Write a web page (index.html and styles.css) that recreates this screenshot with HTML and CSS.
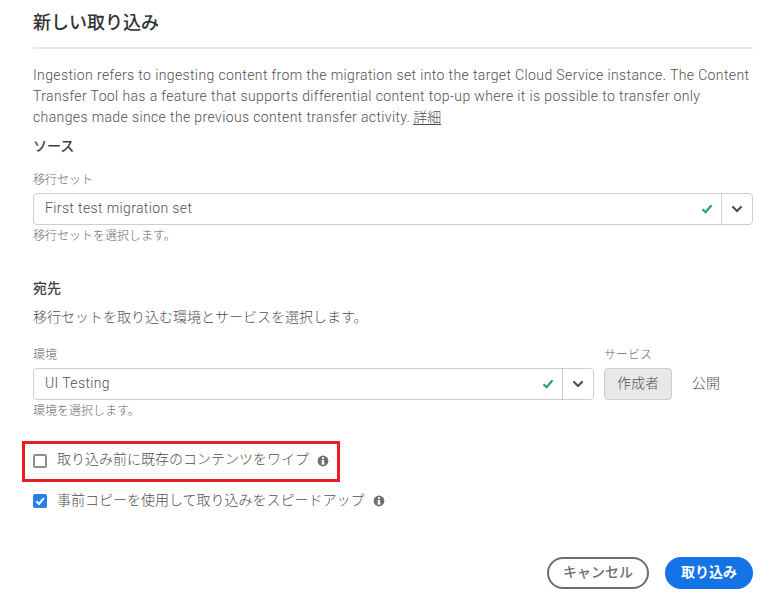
FILE: index.html
```html
<!DOCTYPE html>
<html lang="ja">
<head>
<meta charset="utf-8">
<title>新しい取り込み</title>
<link rel="stylesheet" href="styles.css">
</head>
<body>
<main class="dialog">
  <h1 class="title">新しい取り込み</h1>
  <p class="intro">Ingestion refers to ingesting content from the migration set into the target Cloud Service instance. The Content<br>Transfer Tool has a feature that supports differential content top-up where it is possible to transfer only<br>changes made since the previous content transfer activity. <a class="more">詳細</a></p>
  <h2 class="section">ソース</h2>
  <div class="field source">
    <div class="label">移行セット</div>
    <div class="combo">
      <span class="value latin">First test migration set</span>
      <svg class="valid" viewBox="0 0 12 12"><path d="M1.5 6.2 4.6 9.2 10.5 2.2"/></svg>
      <span class="drop"><svg class="chevron" viewBox="0 0 12 8"><path d="M2 2 6 6 10 2"/></svg></span>
    </div>
    <div class="help">移行セットを選択します。</div>
  </div>
  <h2 class="section">宛先</h2>
  <p class="lead">移行セットを取り込む環境とサービスを選択します。</p>
  <div class="row">
    <div class="field environment">
      <div class="label">環境</div>
      <div class="combo">
        <span class="value latin">UI Testing</span>
        <svg class="valid" viewBox="0 0 12 12"><path d="M1.5 6.2 4.6 9.2 10.5 2.2"/></svg>
        <span class="drop"><svg class="chevron" viewBox="0 0 12 8"><path d="M2 2 6 6 10 2"/></svg></span>
      </div>
      <div class="help">環境を選択します。</div>
    </div>
    <div class="field service">
      <div class="label">サービス</div>
      <div class="tabs"><span class="tab selected">作成者</span><span class="tab">公開</span></div>
    </div>
  </div>
  <div class="option marked">
    <span class="box"></span>
    <span class="text">取り込み前に既存のコンテンツをワイプ</span>
    <svg class="info" viewBox="0 0 12 12"><circle cx="6" cy="6" r="5.4"/><path d="M5 2.3h2v1.8H5zM4.5 5H7v3.2h.7v1.2H4.4V8.2H5V6.1h-.5z"/></svg>
  </div>
  <div class="option">
    <span class="box checked"><svg viewBox="0 0 14 14"><path d="M3.3 7.2 6 10 10.8 4.2"/></svg></span>
    <span class="text">事前コピーを使用して取り込みをスピードアップ</span>
    <svg class="info" viewBox="0 0 12 12"><circle cx="6" cy="6" r="5.4"/><path d="M5 2.3h2v1.8H5zM4.5 5H7v3.2h.7v1.2H4.4V8.2H5V6.1h-.5z"/></svg>
  </div>
  <footer class="actions">
    <button class="btn cancel">キャンセル</button>
    <button class="btn primary">取り込み</button>
  </footer>
</main>
</body>
</html>
```
FILE: styles.css
```css
* { box-sizing: border-box; }
body {
  margin: 0;
  background: #fff;
  color: #505050;
  font: 300 14px/21px "Noto Sans CJK JP", sans-serif;
}
h1, h2, p { margin: 0; }
.dialog { padding: 8px 25px 0 33px; height: 599px; overflow: hidden; }
.title {
  height: 41px;
  border-bottom: 2px solid #e8e8e8;
  color: #323232;
  font-size: 18px;
  font-weight: 500;
  line-height: 26px;
}
.intro {
  height: 63px;
  margin-top: 16px;
  font-family: Roboto, "Noto Sans CJK JP", sans-serif;
  letter-spacing: 0.38px;
  white-space: nowrap;
}
.more { margin-left: -1px; letter-spacing: 0; text-decoration: underline; text-underline-offset: 2px; }
.section { color: #404040; font-size: 14px; font-weight: 500; line-height: 21px; margin-top: 7px; }
.label, .help { color: #6a6a6a; font-size: 12px; line-height: 18px; }
.source { margin-top: 14px; }
.combo {
  display: flex;
  align-items: center;
  height: 32px;
  margin-top: 5px;
  border: 1px solid #cecece;
  border-radius: 4px;
}
.value { flex: 1; align-self: flex-start; padding-left: 11px; line-height: 28px; }
.latin { font-family: Roboto, "Noto Sans CJK JP", sans-serif; letter-spacing: 0.38px; }
.valid { width: 12px; height: 12px; margin-right: 8px; fill: none; stroke: #2d9d78; stroke-width: 2.2; }
.drop { display: flex; align-items: center; justify-content: center; width: 31px; height: 30px; border-left: 1px solid #cecece; }
.chevron { width: 12px; height: 8px; fill: none; stroke: #505050; stroke-width: 2.2; stroke-linecap: round; }
.help { margin-top: 1px; }
.source + .section { margin-top: 33px; }
.lead { margin-top: 8px; }
.row { display: flex; gap: 10px; margin-top: 18px; }
.environment { width: 561px; }
.tabs { display: flex; height: 32px; margin-top: 5px; gap: 8px; }
.tab { padding: 0 12px; border: 1px solid transparent; border-radius: 4px; line-height: 27px; }
.tab.selected { background: #e8e8e8; border-color: #cecece; }
.tab:not(.selected) { padding-left: 11px; }
.option { display: flex; align-items: center; height: 38px; margin-left: -11px; padding-left: 11px; }
.marked { width: 318px; height: 41px; margin-top: 22px; border: 3px solid #ed1c24; padding: 0 0 2px 8px; }
.box { width: 14px; height: 14px; border: 2px solid #909090; border-radius: 2px; }
.box.checked { border: 0; background: #2680eb; }
.box svg { display: block; fill: none; stroke: #fff; stroke-width: 2; }
.text { margin: -4px 8px 0 10px; }
.info { width: 12px; height: 12px; fill: #6e6e6e; }
.info path { fill: #fff; }
.actions { display: flex; justify-content: flex-end; gap: 16px; margin-top: 37px; }
.btn {
  height: 32px;
  padding: 0 14px 5px;
  border: 2px solid #6e6e6e;
  border-radius: 16px;
  background: #fff;
  color: #6e6e6e;
  font: 700 14px/20px "Noto Sans CJK JP", sans-serif;
}
.cancel { width: 102px; font-weight: 500; }
.primary { width: 88px; border-color: #1473e6; background: #1473e6; color: #fff; }
```
